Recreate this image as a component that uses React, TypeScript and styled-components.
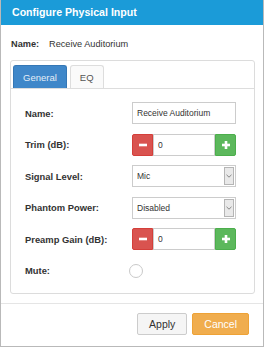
import React from "react";
import styled, { createGlobalStyle } from "styled-components";

const GlobalStyle = createGlobalStyle`
  html, body {
    margin: 0;
    padding: 0;
    background: #ffffff;
  }
  body {
    font-family: "Liberation Sans", Arial, sans-serif;
    color: #333333;
  }
`;

const Dialog = styled.div`
  width: 264px;
  height: 347px;
  box-sizing: border-box;
  border: 1px solid #b9b9b9;
  border-top: none;
  background: #ffffff;
  display: flex;
  flex-direction: column;
`;

const Header = styled.div`
  height: 25px;
  line-height: 25px;
  padding-left: 11px;
  background: #1b9bd8;
  color: #ffffff;
  font-weight: bold;
  font-size: 10.6px;
`;

const Body = styled.div`
  padding: 0 8px 9px 9px;
`;

const NameLine = styled.div`
  display: flex;
  align-items: center;
  height: 14px;
  margin: 12px 0 9px 1px;
  font-size: 9.2px;
`;

const NameLabel = styled.span`
  font-weight: bold;
  width: 38px;
`;

const Panel = styled.div`
  border: 1px solid #dcdcdc;
  border-radius: 3px;
  padding-top: 4px;
`;

const TabStrip = styled.div`
  display: flex;
  gap: 3px;
  padding-left: 2px;
  border-bottom: 1px solid #dddddd;
`;

const Tab = styled.div<{ active?: boolean }>`
  height: 23px;
  line-height: 23px;
  padding: 0 9px;
  box-sizing: border-box;
  font-size: 9.5px;
  border: 1px solid ${(p) => (p.active ? "#3577b5" : "#dddddd")};
  border-bottom: none;
  border-radius: 3px 3px 0 0;
  background: ${(p) => (p.active ? "#3f87c9" : "#fafafa")};
  color: ${(p) => (p.active ? "#e4edf7" : "#555555")};
  text-align: center;
`;

const Form = styled.div`
  display: grid;
  grid-template-columns: 107px 104px;
  grid-auto-rows: 22px;
  row-gap: 9.5px;
  padding: 13px 0 11px 14px;
  align-items: center;
`;

const Label = styled.div`
  font-weight: bold;
  font-size: 9.4px;
  color: #333333;
`;

const TextBox = styled.div`
  height: 22px;
  box-sizing: border-box;
  border: 1px solid #cccccc;
  display: flex;
  align-items: center;
  padding-left: 4px;
  font-size: 8.5px;
  color: #333333;
  background: #ffffff;
  flex: 1;
`;

const Stepper = styled.div`
  display: flex;
  height: 22px;
`;

const StepButton = styled.div<{ kind: "minus" | "plus" }>`
  width: 21px;
  height: 22px;
  box-sizing: border-box;
  display: flex;
  align-items: center;
  justify-content: center;
  background: ${(p) => (p.kind === "minus" ? "#d9534f" : "#5cb85c")};
  border: 1px solid ${(p) => (p.kind === "minus" ? "#d43f3a" : "#4cae4c")};
  border-radius: ${(p) => (p.kind === "minus" ? "2px 0 0 2px" : "0 2px 2px 0")};
`;

const SelectBox = styled.div`
  height: 22px;
  box-sizing: border-box;
  border: 1px solid #cccccc;
  display: flex;
  align-items: stretch;
  background: #ffffff;
  font-size: 8.5px;
  color: #333333;
  padding: 1px;
`;

const SelectValue = styled.span`
  flex: 1;
  display: flex;
  align-items: center;
  padding-left: 3px;
`;

const ArrowBox = styled.span`
  width: 10px;
  box-sizing: border-box;
  border: 1px solid #b5b5b5;
  background: #e9e9e9;
  display: flex;
  align-items: center;
  justify-content: center;
`;

const Radio = styled.div`
  width: 14px;
  height: 14px;
  box-sizing: border-box;
  border: 1px solid #c9c9c9;
  border-radius: 50%;
  margin-left: -3px;
  background: #ffffff;
`;

const Footer = styled.div`
  border-top: 1px solid #e5e5e5;
  padding: 9px 14px 0 0;
  display: flex;
  justify-content: flex-end;
  gap: 5px;
`;

const Button = styled.div<{ variant: "default" | "warning" }>`
  height: 22px;
  box-sizing: border-box;
  padding: 0 11px;
  display: flex;
  align-items: center;
  justify-content: center;
  font-size: 10.5px;
  border-radius: 2px;
  border: 1px solid ${(p) => (p.variant === "warning" ? "#eea236" : "#cccccc")};
  background: ${(p) => (p.variant === "warning" ? "#f0ad4e" : "#f5f5f5")};
  color: ${(p) => (p.variant === "warning" ? "#ffffff" : "#333333")};
`;

const MinusIcon = () => (
  <svg width="8" height="8" viewBox="0 0 8 8">
    <rect x="0" y="2.7" width="8" height="2.6" fill="#ffffff" />
  </svg>
);

const PlusIcon = () => (
  <svg width="8" height="8" viewBox="0 0 8 8">
    <rect x="0" y="2.7" width="8" height="2.6" fill="#ffffff" />
    <rect x="2.7" y="0" width="2.6" height="8" fill="#ffffff" />
  </svg>
);

const Chevron = () => (
  <svg width="6" height="4" viewBox="0 0 6 4">
    <polyline points="0.5,0.8 3,3.2 5.5,0.8" fill="none" stroke="#7a7a7a" strokeWidth="0.9" />
  </svg>
);

const NumberField = ({ value }: { value: string }) => (
  <Stepper>
    <StepButton kind="minus">
      <MinusIcon />
    </StepButton>
    <TextBox>{value}</TextBox>
    <StepButton kind="plus">
      <PlusIcon />
    </StepButton>
  </Stepper>
);

const Select = ({ value }: { value: string }) => (
  <SelectBox>
    <SelectValue>{value}</SelectValue>
    <ArrowBox>
      <Chevron />
    </ArrowBox>
  </SelectBox>
);

export default function App() {
  return (
    <>
      <GlobalStyle />
      <Dialog>
        <Header>Configure Physical Input</Header>
        <Body>
          <NameLine>
            <NameLabel>Name:</NameLabel>
            <span>Receive Auditorium</span>
          </NameLine>
          <Panel>
            <TabStrip>
              <Tab active>General</Tab>
              <Tab>EQ</Tab>
            </TabStrip>
            <Form>
              <Label>Name:</Label>
              <TextBox>Receive Auditorium</TextBox>

              <Label>Trim (dB):</Label>
              <NumberField value="0" />

              <Label>Signal Level:</Label>
              <Select value="Mic" />

              <Label>Phantom Power:</Label>
              <Select value="Disabled" />

              <Label>Preamp Gain (dB):</Label>
              <NumberField value="0" />

              <Label>Mute:</Label>
              <Radio />
            </Form>
          </Panel>
        </Body>
        <Footer>
          <Button variant="default">Apply</Button>
          <Button variant="warning">Cancel</Button>
        </Footer>
      </Dialog>
    </>
  );
}
